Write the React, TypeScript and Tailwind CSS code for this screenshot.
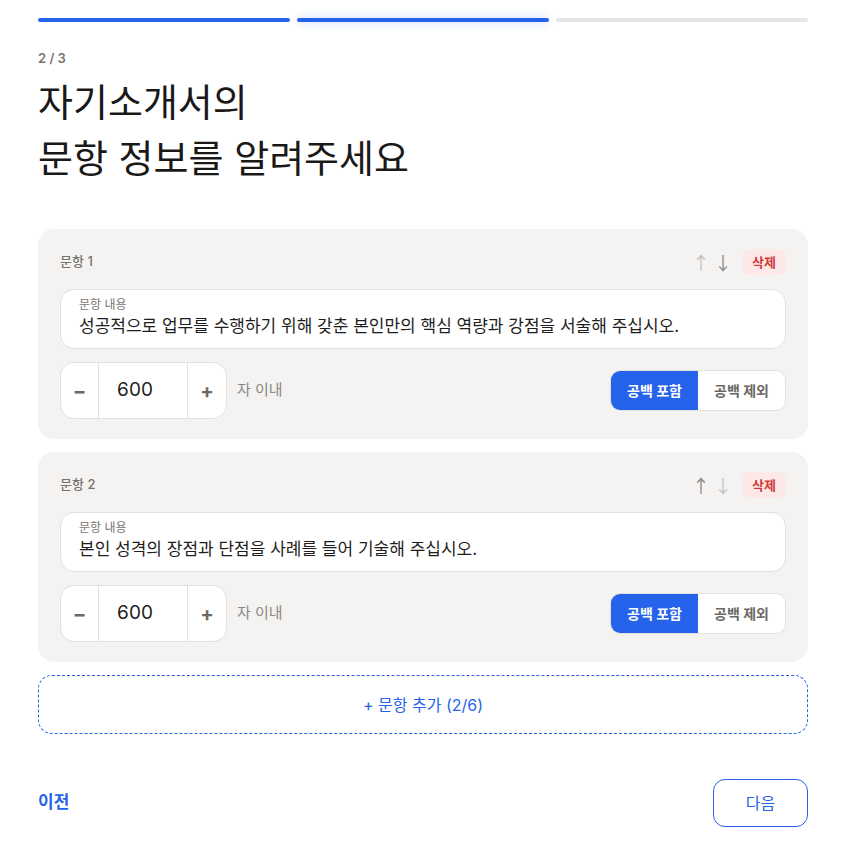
import { useState } from "react";

const font = { fontFamily: 'Inter, "Noto Sans CJK KR", sans-serif' };

interface Question {
  id: number;
  text: string;
  limit: number;
  withSpaces: boolean;
}

const initial: Question[] = [
  {
    id: 1,
    text: "성공적으로 업무를 수행하기 위해 갖춘 본인만의 핵심 역량과 강점을 서술해 주십시오.",
    limit: 600,
    withSpaces: true,
  },
  {
    id: 2,
    text: "본인 성격의 장점과 단점을 사례를 들어 기술해 주십시오.",
    limit: 600,
    withSpaces: true,
  },
];

function QuestionCard({
  q,
  index,
  total,
  onChange,
}: {
  q: Question;
  index: number;
  total: number;
  onChange: (q: Question) => void;
}) {
  const upDisabled = index === 0;
  const downDisabled = index === total - 1;
  return (
    <div className="rounded-2xl bg-[#f4f3f2] px-[22px] pt-5 pb-5">
      <div className="flex h-[26px] items-center justify-between">
        <span className="text-[13px] font-medium text-[#77746f]">문항 {index + 1}</span>
        <div className="flex items-center font-['Noto_Sans_CJK_KR',sans-serif]">
          <button className={`w-[22px] text-[18px] ${upDisabled ? "text-[#c4c2bf]" : "text-[#8a8784]"}`}>↑</button>
          <button className={`w-[22px] text-[18px] ${downDisabled ? "text-[#c4c2bf]" : "text-[#8a8784]"}`}>↓</button>
          <button className="ml-[8px] h-[26px] w-[44px] rounded-lg bg-[#fde8e8] text-[13px] font-bold text-[#d03a3a]">
            삭제
          </button>
        </div>
      </div>

      <div className="mt-[14px] h-[60px] rounded-[14px] border border-[#e3e1de] bg-white px-[18px] pt-[7px]">
        <div className="text-[12px] leading-4 text-[#77746f]">문항 내용</div>
        <input
          value={q.text}
          onChange={(e) => onChange({ ...q, text: e.target.value })}
          className="mt-[1px] w-full bg-transparent text-[17px] leading-6 text-[#1f1e1d] outline-none"
        />
      </div>

      <div className="mt-[13px] flex items-center justify-between">
        <div className="flex items-center">
          <div className="flex h-[57px] w-[167px] overflow-hidden rounded-[14px] border border-[#e3e1de] bg-white">
            <button
              onClick={() => onChange({ ...q, limit: Math.max(0, q.limit - 100) })}
              className="w-[38px] border-r border-[#e3e1de] text-[20px] font-bold text-[#6b6965]"
            >
              −
            </button>
            <div className="flex flex-1 items-center justify-center pr-[16px] text-[19px] text-[#1f1e1d]">{q.limit}</div>
            <button
              onClick={() => onChange({ ...q, limit: q.limit + 100 })}
              className="w-[39px] border-l border-[#e3e1de] text-[20px] font-bold text-[#6b6965]"
            >
              +
            </button>
          </div>
          <span className="ml-[10px] text-[15px] text-[#8a8784]">자 이내</span>
        </div>

        <div className="flex h-[41px] w-[176px] overflow-hidden rounded-[10px] border border-[#e3e1de] bg-white">
          <button
            onClick={() => onChange({ ...q, withSpaces: true })}
            className={`w-[87px] text-[14px] font-bold ${q.withSpaces ? "bg-[#2563eb] text-white" : "text-[#6b6965]"}`}
          >
            공백 포함
          </button>
          <button
            onClick={() => onChange({ ...q, withSpaces: false })}
            className={`flex-1 text-[14px] font-bold ${!q.withSpaces ? "bg-[#2563eb] text-white" : "text-[#6b6965]"}`}
          >
            공백 제외
          </button>
        </div>
      </div>
    </div>
  );
}

export default function App() {
  const [questions, setQuestions] = useState<Question[]>(initial);

  return (
    <div className="min-h-screen bg-white" style={font}>
      <div className="ml-[38px] w-[770px] pt-[18px]">
        <div className="flex gap-[7px]">
          <div className="h-1 flex-1 rounded-full bg-[#2563eb]" />
          <div className="h-1 flex-1 rounded-full bg-[#2563eb] shadow-[0_0_8px_rgba(37,99,235,0.3)]" />
          <div className="h-1 flex-1 rounded-full bg-[#e6e6e6]" />
        </div>

        <div className="mt-[26px] text-[13px] font-semibold leading-5 text-[#77746f]">2 / 3</div>
        <h1 className="mt-[6px] text-[38px] font-normal leading-[56px] text-[#1a1918]">
          자기소개서의
          <br />
          문항 정보를 알려주세요
        </h1>

        <div className="mt-[43px] flex flex-col gap-[13px]">
          {questions.map((q, i) => (
            <QuestionCard
              key={q.id}
              q={q}
              index={i}
              total={questions.length}
              onChange={(nq) => setQuestions(questions.map((x) => (x.id === nq.id ? nq : x)))}
            />
          ))}
          <button className="h-[59px] rounded-[14px] border border-dashed border-[#2563eb] text-[16px] text-[#2563eb]">
            + 문항 추가 ({questions.length}/6)
          </button>
        </div>

        <div className="mt-[45px] flex items-center justify-between">
          <button className="text-[17px] font-bold text-[#2563eb]">이전</button>
          <button className="h-[48px] w-[95px] rounded-xl border border-[#2563eb] text-[16px] text-[#2563eb]">
            다음
          </button>
        </div>
      </div>
    </div>
  );
}
